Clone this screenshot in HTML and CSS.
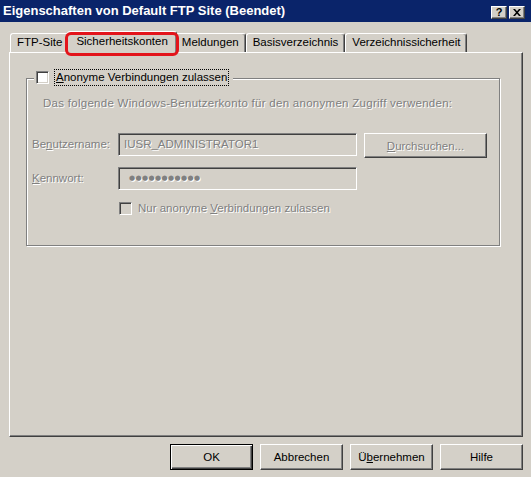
FILE: index.html
```html
<!DOCTYPE html>
<html lang="de">
<head>
<meta charset="utf-8">
<title>Eigenschaften von Default FTP Site</title>
<link rel="stylesheet" href="styles.css">
</head>
<body>
<div class="window">
  <div class="titlebar">
    <span class="title">Eigenschaften von Default FTP Site (Beendet)</span>
    <div class="caption-buttons">
      <span class="cap-btn help">?</span>
      <span class="cap-btn close"><svg width="8" height="7" viewBox="0 0 8 7"><path d="M0 0h2l2 2.2L6 0h2L5 3.5 8 7H6L4 4.8 2 7H0l3-3.5z" fill="#000"/></svg></span>
    </div>
  </div>
  <div class="tabs">
    <div class="tab">FTP-Site</div>
    <div class="tab selected">Sicherheitskonten<span class="highlight"></span></div>
    <div class="tab">Meldungen</div>
    <div class="tab">Basisverzeichnis</div>
    <div class="tab">Verzeichnissicherheit</div>
  </div>
  <div class="panel">
    <div class="group">
      <div class="group-head">
        <span class="checkbox"></span>
        <span class="focus-label"><u>A</u>nonyme Verbindungen zulassen</span>
      </div>
      <p class="desc disabled">Das folgende Windows-Benutzerkonto für den anonymen Zugriff verwenden:</p>
      <div class="field-row">
        <span class="field-label disabled">Be<u>n</u>utzername:</span>
        <div class="edit disabled">IUSR_ADMINISTRATOR1</div>
        <div class="button browse disabled"><span><u>D</u>urchsuchen...</span></div>
      </div>
      <div class="field-row second">
        <span class="field-label disabled"><u>K</u>ennwort:</span>
        <div class="edit password disabled">●●●●●●●●●●●</div>
      </div>
      <div class="check-row">
        <span class="checkbox off"></span>
        <span class="disabled">Nur anonyme <u>V</u>erbindungen zulassen</span>
      </div>
    </div>
  </div>
  <div class="footer">
    <div class="button default">OK</div>
    <div class="button">Abbrechen</div>
    <div class="button">Ü<u>b</u>ernehmen</div>
    <div class="button">Hilfe</div>
  </div>
</div>
</body>
</html>
```
FILE: styles.css
```css
* { box-sizing: border-box; }
body {
  margin: 0;
  background: #d4d0c8;
  font-family: "Liberation Sans", Arial, sans-serif;
  font-size: 11.5px;
  color: #000;
}
.window {
  width: 531px;
  height: 477px;
  display: flex;
  flex-direction: column;
  background: #d4d0c8;
  overflow: hidden;
}
.titlebar {
  height: 22px;
  flex: none;
  background: #0a246a;
  display: flex;
  align-items: center;
  justify-content: space-between;
  padding: 0 6px 0 3px;
  color: #fff;
  font-weight: bold;
  font-size: 13px;
}
.title { line-height: 22px; }
.caption-buttons {
  display: flex;
  gap: 2px;
  align-self: flex-end;
  margin-bottom: 3px;
}
.cap-btn {
  width: 16px;
  height: 13px;
  background: #d4d0c8;
  border: 1px solid;
  border-color: #fff #404040 #404040 #fff;
  box-shadow: inset -1px -1px #808080;
  display: flex;
  align-items: center;
  justify-content: center;
  color: #000;
  font-size: 11px;
  font-weight: bold;
  line-height: 1;
}
.tabs {
  display: flex;
  align-items: flex-end;
  height: 21px;
  margin-top: 9px;
  padding-left: 10px;
  flex: none;
}
.tab {
  position: relative;
  height: 19px;
  padding: 0 6px;
  border: 1px solid;
  border-bottom: none;
  border-color: #fff #404040 transparent #fff;
  border-radius: 3px 3px 0 0;
  box-shadow: inset -1px 0 #808080;
  background: #d4d0c8;
  line-height: 17px;
  white-space: nowrap;
}
.tab.selected {
  height: 22px;
  margin: 0 -2px -1px;
  padding: 0 8px;
  z-index: 1;
  line-height: 19px;
}
.highlight {
  position: absolute;
  left: -3px;
  top: 0;
  right: -3px;
  bottom: -3px;
  border: 3px solid #e3141b;
  border-radius: 6px;
}
.panel {
  height: 385px;
  flex: none;
  margin: 0 8px 0 9px;
  border: 1px solid;
  border-color: #fff #404040 #404040 #fff;
  box-shadow: inset -1px -1px #808080;
  padding-top: 25px;
}
.group {
  margin: 0 22px 0 16px;
  height: 168px;
  border: 1px solid #808080;
  box-shadow: inset 1px 1px #fff, 1px 1px #fff;
}
.group-head {
  display: flex;
  align-items: center;
  gap: 6px;
  width: max-content;
  margin: -9px 0 0 7px;
  padding: 0 5px 0 2px;
  background: #d4d0c8;
  height: 15px;
}
.checkbox {
  width: 13px;
  height: 13px;
  flex: none;
  background: #fff;
  border: 1px solid;
  border-color: #808080 #fff #fff #808080;
  box-shadow: inset 1px 1px #404040, inset -1px -1px #d4d0c8;
}
.checkbox.off { background: #d4d0c8; }
.focus-label {
  outline: 1px dotted #000;
  padding: 0 1px;
  line-height: 15px;
}
.disabled {
  color: #808080;
  text-shadow: 1px 1px 0 #fff;
}
.desc {
  margin: 12px 0 0 16px;
  line-height: 13px;
  letter-spacing: 0.28px;
}
.field-row {
  display: flex;
  align-items: flex-start;
  margin: 23px 0 0 5px;
}
.field-row.second { margin-top: 9px; }
.field-label {
  width: 86px;
  line-height: 23px;
}
.edit {
  width: 239px;
  height: 23px;
  padding: 0 5px;
  line-height: 21px;
  border: 1px solid;
  border-color: #808080 #fff #fff #808080;
  box-shadow: inset 1px 1px #404040, inset -1px -1px #d4d0c8;
  white-space: nowrap;
}
.edit.password {
  font-family: "DejaVu Sans", sans-serif;
  font-size: 7px;
  letter-spacing: 0.4px;
  padding-left: 10px;
}
.button {
  width: 83px;
  height: 26px;
  display: flex;
  align-items: center;
  justify-content: center;
  border: 1px solid;
  border-color: #fff #404040 #404040 #fff;
  box-shadow: inset -1px -1px #808080;
  white-space: nowrap;
}
.button.default {
  border-color: #000;
  box-shadow: inset 1px 1px #fff, inset -1px -1px #404040, inset -2px -2px #808080;
}
.button.browse {
  width: 123px;
  height: 25px;
  margin-left: 7px;
}
.check-row {
  display: flex;
  align-items: center;
  gap: 6px;
  margin: 11px 0 0 92px;
  line-height: 15px;
}
.footer {
  display: flex;
  justify-content: flex-end;
  gap: 7px;
  margin-top: 7px;
  padding-right: 8px;
}
```
